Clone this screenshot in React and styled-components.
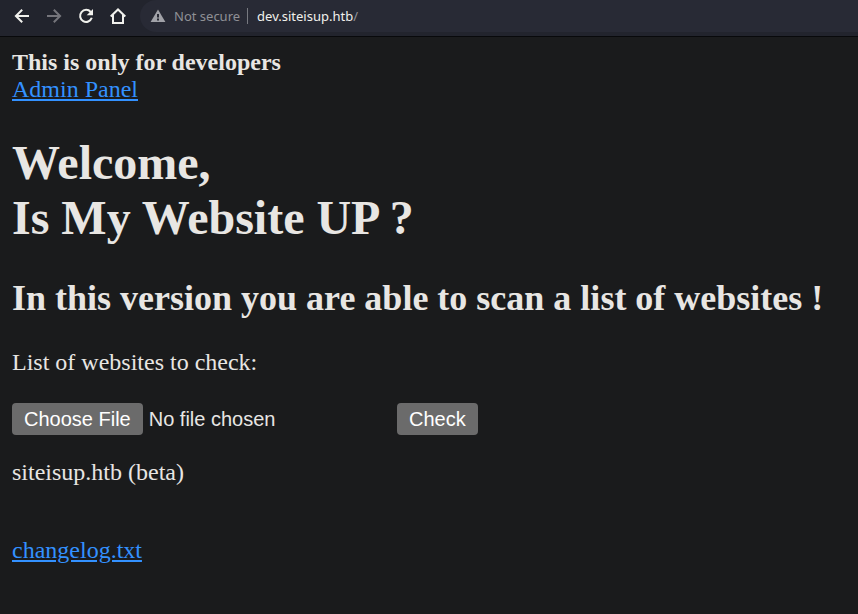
import React from "react";
import styled, { createGlobalStyle } from "styled-components";

const GlobalStyle = createGlobalStyle`
  * { box-sizing: border-box; }
  html, body { margin: 0; background: #1a1b1c; }
  body { overflow: hidden; }
`;

const Browser = styled.div`
  display: flex;
  flex-direction: column;
  height: 614px;
  background: #1a1b1c;
`;

const Toolbar = styled.header`
  display: flex;
  flex: none;
  height: 37px;
  padding-left: 14px;
  background: #22242d;
  border-bottom: 1px solid #08090b;
`;

const NavGroup = styled.nav`
  display: flex;
  gap: 16px;
  height: 32px;
  align-items: center;
`;

const NavButton = styled.button`
  display: flex;
  width: 16px;
  height: 16px;
  padding: 0;
  border: 0;
  background: none;
  color: ${(p) => (p.$muted ? "#75757b" : "#f1f1ed")};
`;

const AddressBar = styled.div`
  display: flex;
  flex: 1;
  align-items: center;
  height: 32px;
  margin-left: 14px;
  padding-left: 10px;
  border-radius: 16px 0 0 16px;
  background: #282a35;
  font: 13px/18px "Noto Sans", sans-serif;
`;

const Security = styled.span`
  margin-left: 8px;
  color: #8f9095;
`;

const Divider = styled.span`
  width: 1px;
  height: 16px;
  margin: 0 9px 0 7px;
  background: #777980;
`;

const Url = styled.span`
  color: #f1f1ed;
`;

const UrlPath = styled.span`
  color: #929399;
`;

const Page = styled.main`
  flex: 1;
  padding: 12px;
  color: #e8e6e3;
  font: 24px/27px "Liberation Serif", serif;
`;

const Link = styled.a`
  color: #3391ff;
  text-decoration: underline;
`;

const Title = styled.h1`
  margin: 32px 0;
  font-size: 48px;
  line-height: 55px;
`;

const Subtitle = styled.h2`
  margin: 0 0 30px;
  font-size: 36px;
  line-height: 42px;
  white-space: nowrap;
`;

const UploadForm = styled.form`
  display: flex;
  align-items: center;
  height: 32px;
  margin: 27px 0 24px;
  font: 20px/23px "Liberation Sans", sans-serif;
`;

const FilePicker = styled.div`
  display: flex;
  align-items: center;
  gap: 6px;
  width: 385px;
`;

const Button = styled.button`
  height: 32px;
  padding: 0 12px;
  border: 0;
  border-radius: 4px;
  background: #6b6b6b;
  color: #fff;
  font: inherit;
  white-space: nowrap;
`;

const Footer = styled.footer`
  display: flex;
  flex-direction: column;
  align-items: flex-start;
  gap: 51px;
`;

const Icon = ({ children }) => (
  <svg width="16" height="16" viewBox="0 0 16 16" fill="none" stroke="currentColor" strokeWidth="2">
    {children}
  </svg>
);

export default function App() {
  return (
    <Browser>
      <GlobalStyle />
      <Toolbar>
        <NavGroup>
          <NavButton aria-label="Back">
            <Icon><path d="M15 8H2.5M8.2 1.7 1.9 8l6.3 6.3" /></Icon>
          </NavButton>
          <NavButton $muted aria-label="Forward">
            <Icon><path d="M1 8h12.5M7.8 1.7 14.1 8l-6.3 6.3" /></Icon>
          </NavButton>
          <NavButton aria-label="Reload">
            <Icon>
              <path d="M12.7 4A6 6 0 1 0 13.8 9.8" />
              <path d="M15 1v6.3H8.7z" fill="currentColor" stroke="none" />
            </Icon>
          </NavButton>
          <NavButton aria-label="Home">
            <Icon><path d="M3 7v8h10V7M.7 8.5 8 1.5l7.3 7" /></Icon>
          </NavButton>
        </NavGroup>
        <AddressBar>
          <svg width="16" height="16" viewBox="0 0 16 16">
            <path d="M8 1.5 15.4 14H.6z" fill="#a1a2a8" />
            <path d="M7 6h2v3.5H7zM7 10.5h2v2H7z" fill="#282a35" />
          </svg>
          <Security>Not secure</Security>
          <Divider />
          <Url>dev.siteisup.htb<UrlPath>/</UrlPath></Url>
        </AddressBar>
      </Toolbar>
      <Page>
        <b>This is only for developers</b>
        <br />
        <Link>Admin Panel</Link>
        <Title>Welcome,<br />Is My Website UP ?</Title>
        <Subtitle>In this version you are able to scan a list of websites !</Subtitle>
        <div>List of websites to check:</div>
        <UploadForm>
          <FilePicker>
            <Button type="button">Choose File</Button>
            <span>No file chosen</span>
          </FilePicker>
          <Button type="button">Check</Button>
        </UploadForm>
        <Footer>
          <span>siteisup.htb (beta)</span>
          <Link>changelog.txt</Link>
        </Footer>
      </Page>
    </Browser>
  );
}
